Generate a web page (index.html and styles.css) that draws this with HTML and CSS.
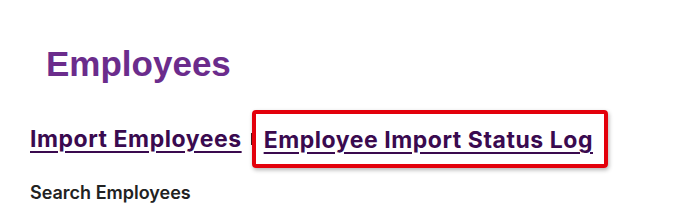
FILE: index.html
```html
<!DOCTYPE html>
<html lang="en">
<head>
    <meta charset="UTF-8">
    <meta name="viewport" content="width=device-width, initial-scale=1.0">
    <title>Employees</title>
    <link rel="stylesheet" href="styles.css">
</head>
<body>
    <div class="page">
        <h1 class="title">Employees</h1>
        <div class="links">
            <a href="#" class="link">Import Employees</a>
            <span class="sep"></span>
            <span class="mark">
                <a href="#" class="link">Employee Import Status Log</a>
            </span>
        </div>
        <h3 class="search">Search Employees</h3>
    </div>
</body>
</html>
```

FILE: styles.css
```css
*{
    margin: 0;
    padding: 0;
    box-sizing: border-box;
}
body{
    background: #fff;
    font-family: Inter, "Noto Sans", sans-serif;
}
.page{
    padding: 44px 0 0 30px;
}
.title{
    margin-left: 16px;
    font-family: "Liberation Sans", Arial, sans-serif;
    font-size: 35px;
    line-height: 40px;
    font-weight: bold;
    color: #6b2c8c;
}
.links{
    display: flex;
    align-items: center;
    margin-top: 26px;
}
.link{
    font-size: 23px;
    font-weight: 700;
    letter-spacing: 0.55px;
    line-height: 30px;
    color: #3a0a4f;
    text-decoration: underline;
    text-decoration-thickness: 2px;
    text-underline-offset: 4px;
}
.sep{
    width: 2px;
    height: 12px;
    margin-left: 9px;
    background: #4a1a1a;
}
.mark{
    display: inline-block;
    margin-left: -1px;
    padding: 11px 11px 9px 8px;
    border: 4px solid #e3000b;
    border-radius: 4px;
    box-shadow: 1px 2px 4px rgba(0,0,0,0.3);
}
.search{
    margin-top: 14px;
    font-size: 18px;
    font-weight: 600;
    color: #222;
}
```
